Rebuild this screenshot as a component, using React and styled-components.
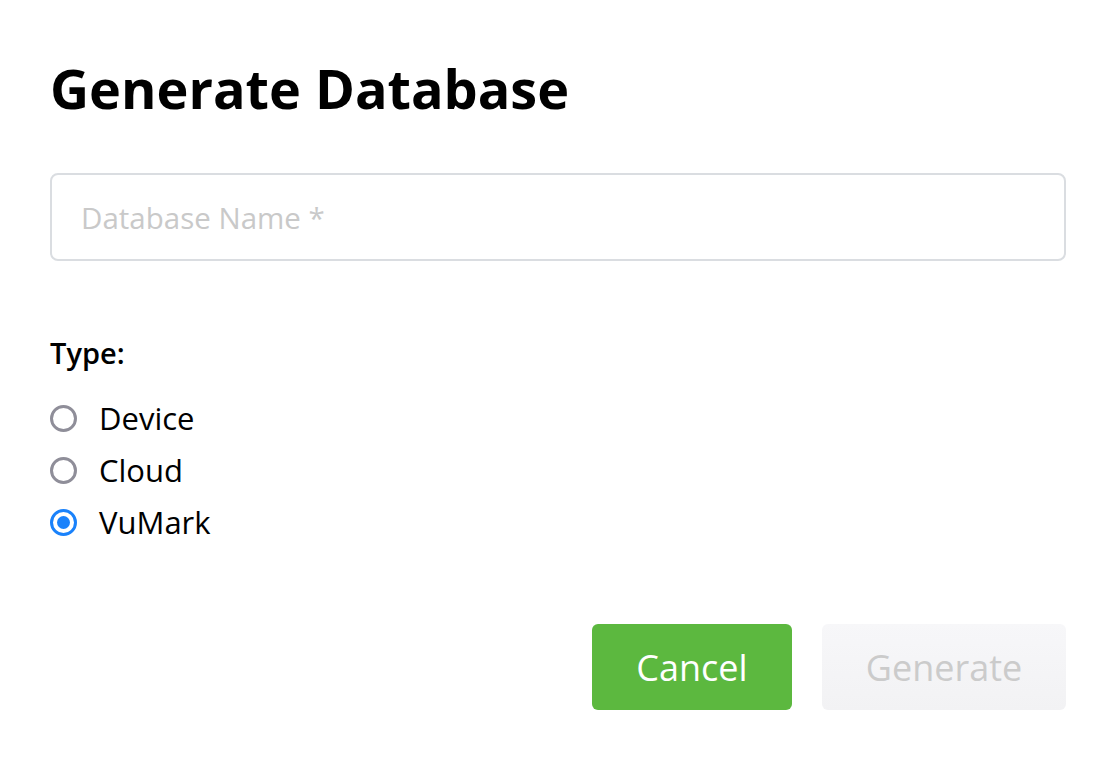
import styled, { createGlobalStyle } from 'styled-components';

const GlobalStyle = createGlobalStyle`
  html, body {
    margin: 0;
    padding: 0;
    background: #ffffff;
    font-family: "Open Sans", "Noto Sans", sans-serif;
    color: #000;
  }
`

const Dialog = styled.div`
  box-sizing: border-box;
  width: 1116px;
  height: 764px;
  padding: 52px 50px 0 50px;
  display: flex;
  flex-direction: column;
`

const Title = styled.h1`
  margin: 0;
  font-size: 54px;
  font-weight: 700;
  line-height: 72px;
  letter-spacing: 0;
`

const NameInput = styled.input`
  box-sizing: border-box;
  margin-top: 49px;
  width: 100%;
  height: 88px;
  border: 2px solid #dadde1;
  border-radius: 8px;
  padding: 0 29px;
  font-family: inherit;
  font-size: 29.5px;
  color: #333;
  outline: none;
  &::placeholder {
    color: #c9c9c9;
  }
`

const Label = styled.div`
  margin-top: 72px;
  font-size: 29px;
  font-weight: 600;
  line-height: 40px;
`

const RadioList = styled.div`
  margin-top: 24px;
  display: flex;
  flex-direction: column;
  gap: 10px;
`

const RadioRow = styled.label`
  display: flex;
  align-items: center;
  gap: 22px;
  font-size: 31px;
  line-height: 42px;
  cursor: pointer;
`

const Circle = styled.span`
  box-sizing: border-box;
  flex: none;
  width: 27px;
  height: 27px;
  border-radius: 50%;
  border: 3.5px solid ${p => (p.$checked ? '#1a82fb' : '#8f8e99')};
  display: flex;
  align-items: center;
  justify-content: center;
  &::after {
    content: '';
    display: ${p => (p.$checked ? 'block' : 'none')};
    width: 13px;
    height: 13px;
    border-radius: 50%;
    background: #1a82fb;
  }
`

const Actions = styled.div`
  margin-top: 81px;
  display: flex;
  justify-content: flex-end;
  gap: 30px;
`

const Button = styled.button`
  box-sizing: border-box;
  height: 86px;
  width: ${p => p.$width};
  border: none;
  border-radius: 6px;
  font-family: inherit;
  font-size: 36px;
  background: ${p => (p.$primary ? '#5cb83f' : 'linear-gradient(#f7f7f9, #f2f2f4)')};
  color: ${p => (p.$primary ? '#ffffff' : '#cbcbcb')};
  cursor: ${p => (p.$primary ? 'pointer' : 'default')};
`

const types = ['Device', 'Cloud', 'VuMark']

export default function App() {
  const selected = 'VuMark'
  return (
    <>
      <GlobalStyle />
      <Dialog>
        <Title>Generate Database</Title>
        <NameInput placeholder="Database Name *" />
        <Label>Type:</Label>
        <RadioList>
          {types.map(t => (
            <RadioRow key={t}>
              <Circle $checked={t === selected} />
              {t}
            </RadioRow>
          ))}
        </RadioList>
        <Actions>
          <Button $primary $width="200px">Cancel</Button>
          <Button $width="244px" disabled>Generate</Button>
        </Actions>
      </Dialog>
    </>
  )
}
